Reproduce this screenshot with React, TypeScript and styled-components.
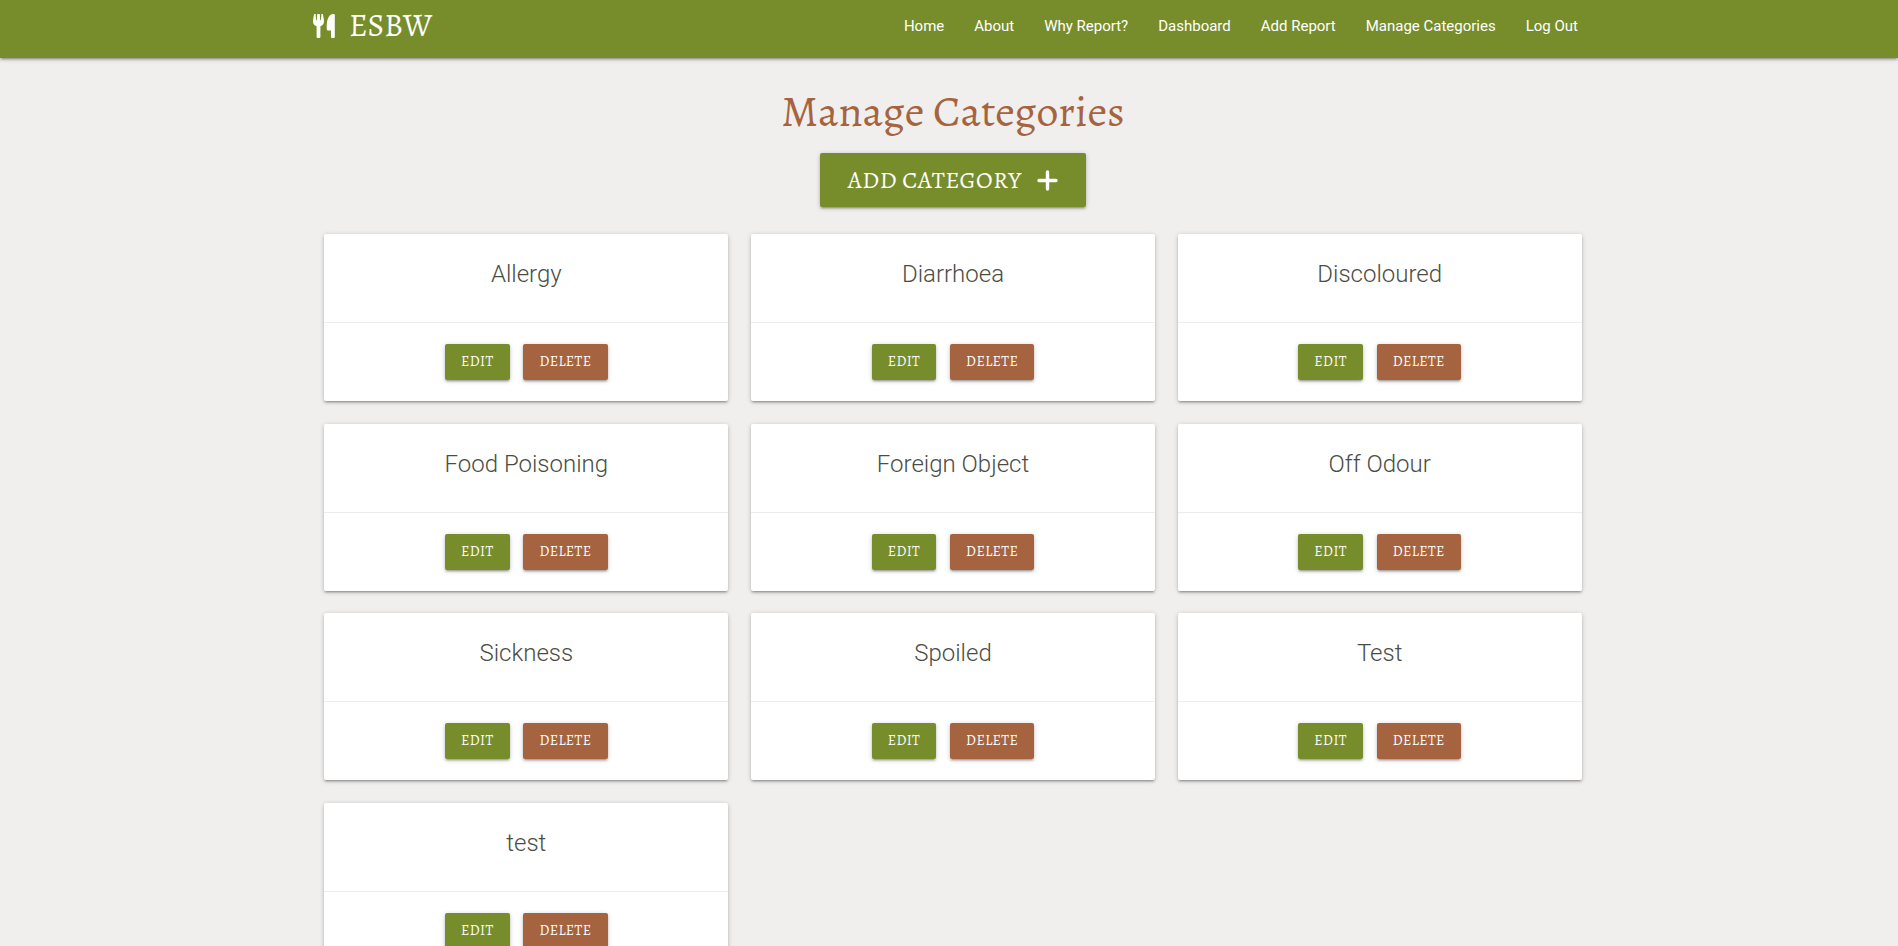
import React from 'react';
import styled, { createGlobalStyle } from 'styled-components';

const GREEN = '#778d2b';
const BROWN = '#a5643f';
const SERIF = "'Alegreya', 'Liberation Serif', serif";
const SHADOW =
  '0 2px 2px 0 rgba(0,0,0,.14), 0 3px 1px -2px rgba(0,0,0,.12), 0 1px 5px 0 rgba(0,0,0,.2)';

const GlobalStyle = createGlobalStyle`
  *, *::before, *::after { box-sizing: border-box; }
  html { overflow: hidden; }
  body {
    margin: 0;
    height: 946px;
    overflow: hidden;
    background: #f0efed;
    font-family: Roboto, sans-serif;
  }
`;

const Nav = styled.nav`
  height: 58px;
  padding-left: 8px;
  background: ${GREEN};
  box-shadow: ${SHADOW};
`;

const NavInner = styled.div`
  display: flex;
  justify-content: space-between;
  width: 1280px;
  height: 52px;
  margin: 0 auto;
  color: #fff;
`;

const Logo = styled.a`
  display: flex;
  align-items: center;
  gap: 14px;
  font-family: ${SERIF};
  font-size: 31.5px;
  line-height: 52px;
`;

const Links = styled.ul`
  display: flex;
  margin: 0;
  padding: 0;
  list-style: none;
`;

const LinkItem = styled.li`
  padding: 0 15px;
  font-size: 15px;
  font-weight: 400;
  line-height: 52px;
`;

const Main = styled.main`
  padding-left: 8px;
`;

const Content = styled.div`
  display: flex;
  flex-direction: column;
  align-items: center;
  width: 1257.5px;
  margin: 0 auto;
`;

const Title = styled.h1`
  margin: 28px 0 17px;
  color: ${BROWN};
  font-family: ${SERIF};
  font-size: 43.8px;
  font-weight: 400;
  line-height: 50px;
`;

const Button = styled.button<{ $tone?: string }>`
  display: flex;
  align-items: center;
  justify-content: center;
  height: 36px;
  padding: 0 0 1px;
  border: 0;
  border-radius: 2px;
  background: ${({ $tone }) => $tone ?? GREEN};
  box-shadow: ${SHADOW};
  color: #fff;
  font-family: ${SERIF};
  font-size: 14px;
  letter-spacing: 0.5px;
  text-transform: uppercase;
`;

const EditButton = styled(Button)`
  width: 64.6px;
`;

const DeleteButton = styled(Button)`
  width: 84.4px;
`;

const AddButton = styled(Button)`
  gap: 15.5px;
  width: 266px;
  height: 54px;
  margin-bottom: 27px;
  padding: 0;
  font-size: 24px;
`;

const Grid = styled.div`
  display: grid;
  grid-template-columns: repeat(3, 1fr);
  gap: 22.5px;
  width: 100%;
`;

const Card = styled.article`
  border-radius: 2px;
  background: #fff;
  box-shadow: ${SHADOW};
`;

const CardTitle = styled.h2`
  height: 88.17px;
  margin: 0;
  padding-top: 24px;
  color: #4b4d44;
  font-size: 24px;
  font-weight: 300;
  line-height: 32px;
  text-align: center;
`;

const CardActions = styled.div`
  display: flex;
  justify-content: center;
  gap: 13.7px;
  padding: 21px 0;
  border-top: 1px solid rgba(160, 160, 160, 0.2);
`;

const CutleryIcon = () => (
  <svg width="22" height="24" viewBox="0 0 22 24" fill="#fff">
    <path d="M1.2 0h1.4l.5 6.2h.7L4.2 0h2.6l.4 6.2h.7L8.400 0h1.400c.5 2.400 1.200 5.200 1.200 7.500 0 2.400-1.400 4-3.600 4.800V23q0 1-1 1H4.600q-1 0-1-1V12.300C1.400 11.500 0 9.900 0 7.500 0 5.200.7 2.400 1.200 0z" />
    <path d="M20.800 0q1 0 1 1v22q0 1-1 1h-1.800q-1 0-1-1v-6.500h-3q-1.200 0-1.200-1.200C13.400 8 14.500 0 20.800 0z" />
  </svg>
);

const links = ['Home', 'About', 'Why Report?', 'Dashboard', 'Add Report', 'Manage Categories', 'Log Out'];
const categories = [
  'Allergy', 'Diarrhoea', 'Discoloured', 'Food Poisoning', 'Foreign Object',
  'Off Odour', 'Sickness', 'Spoiled', 'Test', 'test',
];

export default function App() {
  return (
    <>
      <GlobalStyle />
      <Nav>
        <NavInner>
          <Logo>
            <CutleryIcon />
            ESBW
          </Logo>
          <Links>
            {links.map((label) => (
              <LinkItem key={label}>{label}</LinkItem>
            ))}
          </Links>
        </NavInner>
      </Nav>
      <Main>
        <Content>
          <Title>Manage Categories</Title>
          <AddButton>
            Add Category
            <svg width="21" height="21" viewBox="0 0 21 21" stroke="#fff" strokeWidth="3.4" strokeLinecap="round">
              <path d="M10.500 2v17M2 10.500h17" />
            </svg>
          </AddButton>
          <Grid>
            {categories.map((name) => (
              <Card key={name}>
                <CardTitle>{name}</CardTitle>
                <CardActions>
                  <EditButton>Edit</EditButton>
                  <DeleteButton $tone={BROWN}>Delete</DeleteButton>
                </CardActions>
              </Card>
            ))}
          </Grid>
        </Content>
      </Main>
    </>
  );
}
